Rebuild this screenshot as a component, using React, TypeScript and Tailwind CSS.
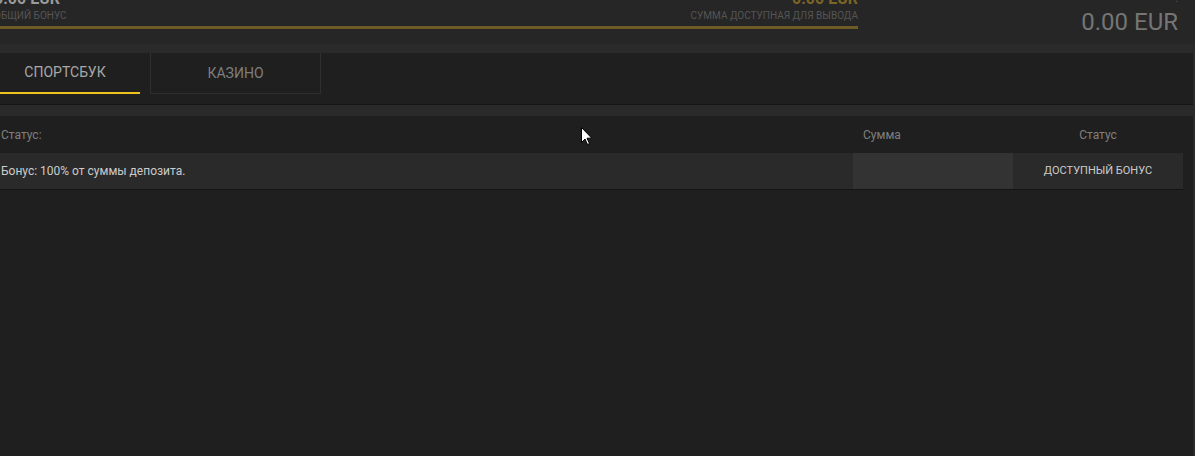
import React from "react";

const Header = () => {
  return (
    <div className="bg-[#262626]">
      <div className="flex h-[44px]">
        <div className="w-[858px] flex flex-col">
          <div className="flex justify-between -mt-[11px]">
            <div className="-ml-[6px] flex flex-col">
              <span className="text-[16px] leading-[19px] font-bold text-[#9a9a9a]">0.00 EUR</span>
              <span className="text-[10px] leading-[14px] text-[#555555] mt-[1px]">ОБЩИЙ БОНУС</span>
            </div>
            <div className="flex flex-col items-end">
              <span className="text-[16px] leading-[19px] font-bold text-[#7a6526]">0.00 EUR</span>
              <span className="text-[10px] leading-[14px] text-[#555555] mt-[1px]">
                СУММА ДОСТУПНАЯ ДЛЯ ВЫВОДА
              </span>
            </div>
          </div>
          <div className="h-[3px] bg-[#6e5c27] mt-[3px]" />
        </div>
        <div className="flex-1 flex flex-col items-end pr-[17px]">
          <span className="text-[10px] leading-[10px] text-[#555555] -mt-[6px]">.</span>
          <span className="text-[24px] leading-[24px] text-[#757575] mt-[6px]">0.00 EUR</span>
        </div>
      </div>
      <div className="h-[9px] bg-[#2a2a2a]" />
    </div>
  );
};

const Tabs = () => {
  return (
    <div className="h-[52px] bg-[#1f1f1f] border-b border-[#151515] flex items-start">
      <div className="w-[140px] h-[41px] flex items-center justify-center border-b-2 border-[#f0c21e] text-[14px] text-[#a8a8a8]">
        <span className="-ml-[10px]">СПОРТСБУК</span>
      </div>
      <div className="ml-[10px] w-[171px] h-[41px] flex items-center justify-center border border-t-0 border-[#2f2f2f] text-[14px] text-[#7e7e7e]">
        КАЗИНО
      </div>
    </div>
  );
};

const BonusTable = () => {
  return (
    <div className="w-[1183px]">
      <div className="h-[37px] flex items-center text-[12px] text-[#7f7f7f]">
        <div className="w-[853px] pl-[1px]">Статус:</div>
        <div className="w-[160px] pl-[10px]">Сумма</div>
        <div className="w-[170px] text-center">Статус</div>
      </div>
      <div className="h-[37px] flex bg-[#2a2a2a] border-b border-[#141414] text-[#cccccc]">
        <div className="w-[853px] pl-[1px] flex items-center text-[12px]">
          Бонус: 100% от суммы депозита.
        </div>
        <div className="w-[160px] bg-[#333333]" />
        <div className="w-[170px] flex items-center justify-center text-[11px]">ДОСТУПНЫЙ БОНУС</div>
      </div>
    </div>
  );
};

const Cursor = () => (
  <svg
    className="absolute left-[581px] top-[127px]"
    width="12"
    height="19"
    viewBox="0 0 12 19"
  >
    <path
      d="M0.5 0.5 L0.5 15.5 L4 12 L6.5 17.5 L8.5 16.5 L6 11.2 L10.8 11.2 Z"
      fill="#ffffff"
      stroke="#000000"
      strokeWidth="1"
    />
  </svg>
);

export default function App() {
  return (
    <div className="w-[1195px] h-[456px] overflow-hidden bg-[#2a2a2a] relative font-['Roboto',sans-serif]">
      <Header />
      <div className="w-[1193px] h-[403px] bg-[#1f1f1f]">
        <Tabs />
        <div className="h-[11px] bg-[#2a2a2a]" />
        <BonusTable />
      </div>
      <Cursor />
    </div>
  );
}
